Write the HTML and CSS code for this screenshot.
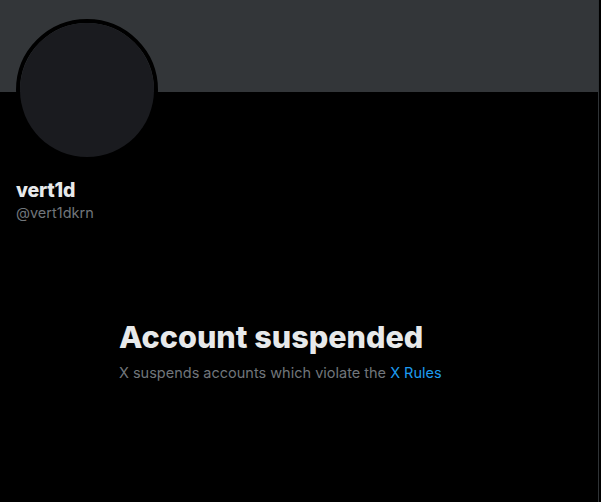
FILE: index.html
```html
<!DOCTYPE html>
<html>
<head>
<meta charset="utf-8">
<link rel="stylesheet" href="styles.css">
</head>
<body>
<main class="column">
  <div class="banner"></div>
  <div class="profile">
    <div class="avatar"><div class="avatar-fill"></div></div>
    <div class="names">
      <div class="name">vert1d</div>
      <div class="handle">@vert1dkrn</div>
    </div>
  </div>
  <section class="empty">
    <h1 class="empty-title">Account suspended</h1>
    <p class="empty-text">X suspends accounts which violate the <a class="link" href="#">X Rules</a></p>
  </section>
</main>
</body>
</html>
```

FILE: styles.css
```css
html, body {
  margin: 0;
  padding: 0;
  background: #000;
  height: 100%;
}
body {
  font-family: Inter, "Noto Sans", "Liberation Sans", sans-serif;
  color: #e7e9ea;
}
.column {
  width: 598px;
  min-height: 502px;
  border-right: 1px solid #2f3336;
  box-sizing: content-box;
}
.banner {
  height: 92px;
  background: #333639;
}
.profile {
  padding: 0 16px;
}
.avatar {
  width: 134px;
  height: 134px;
  border: 4px solid #000;
  border-radius: 50%;
  margin-top: -73px;
  background: #16181c;
  overflow: hidden;
}
.avatar-fill {
  width: 100%;
  height: 100%;
  background: #1a1b1f;
}
.names {
  margin-top: 16px;
}
.name {
  font-size: 19.5px;
  font-weight: 800;
  line-height: 26px;
  color: #e7e9ea;
  letter-spacing: -0.2px;
}
.handle {
  font-size: 14.5px;
  line-height: 20px;
  color: #71767b;
}
.empty {
  width: 360px;
  margin: 96px auto 0;
}
.empty-title {
  margin: 0;
  font-size: 30.6px;
  font-weight: 800;
  line-height: 36px;
  letter-spacing: 0;
  color: #e7e9ea;
}
.empty-text {
  margin: 8px 0 0;
  font-size: 14.5px;
  line-height: 20px;
  color: #71767b;
}
.link {
  color: #1d9bf0;
  text-decoration: none;
}
```
